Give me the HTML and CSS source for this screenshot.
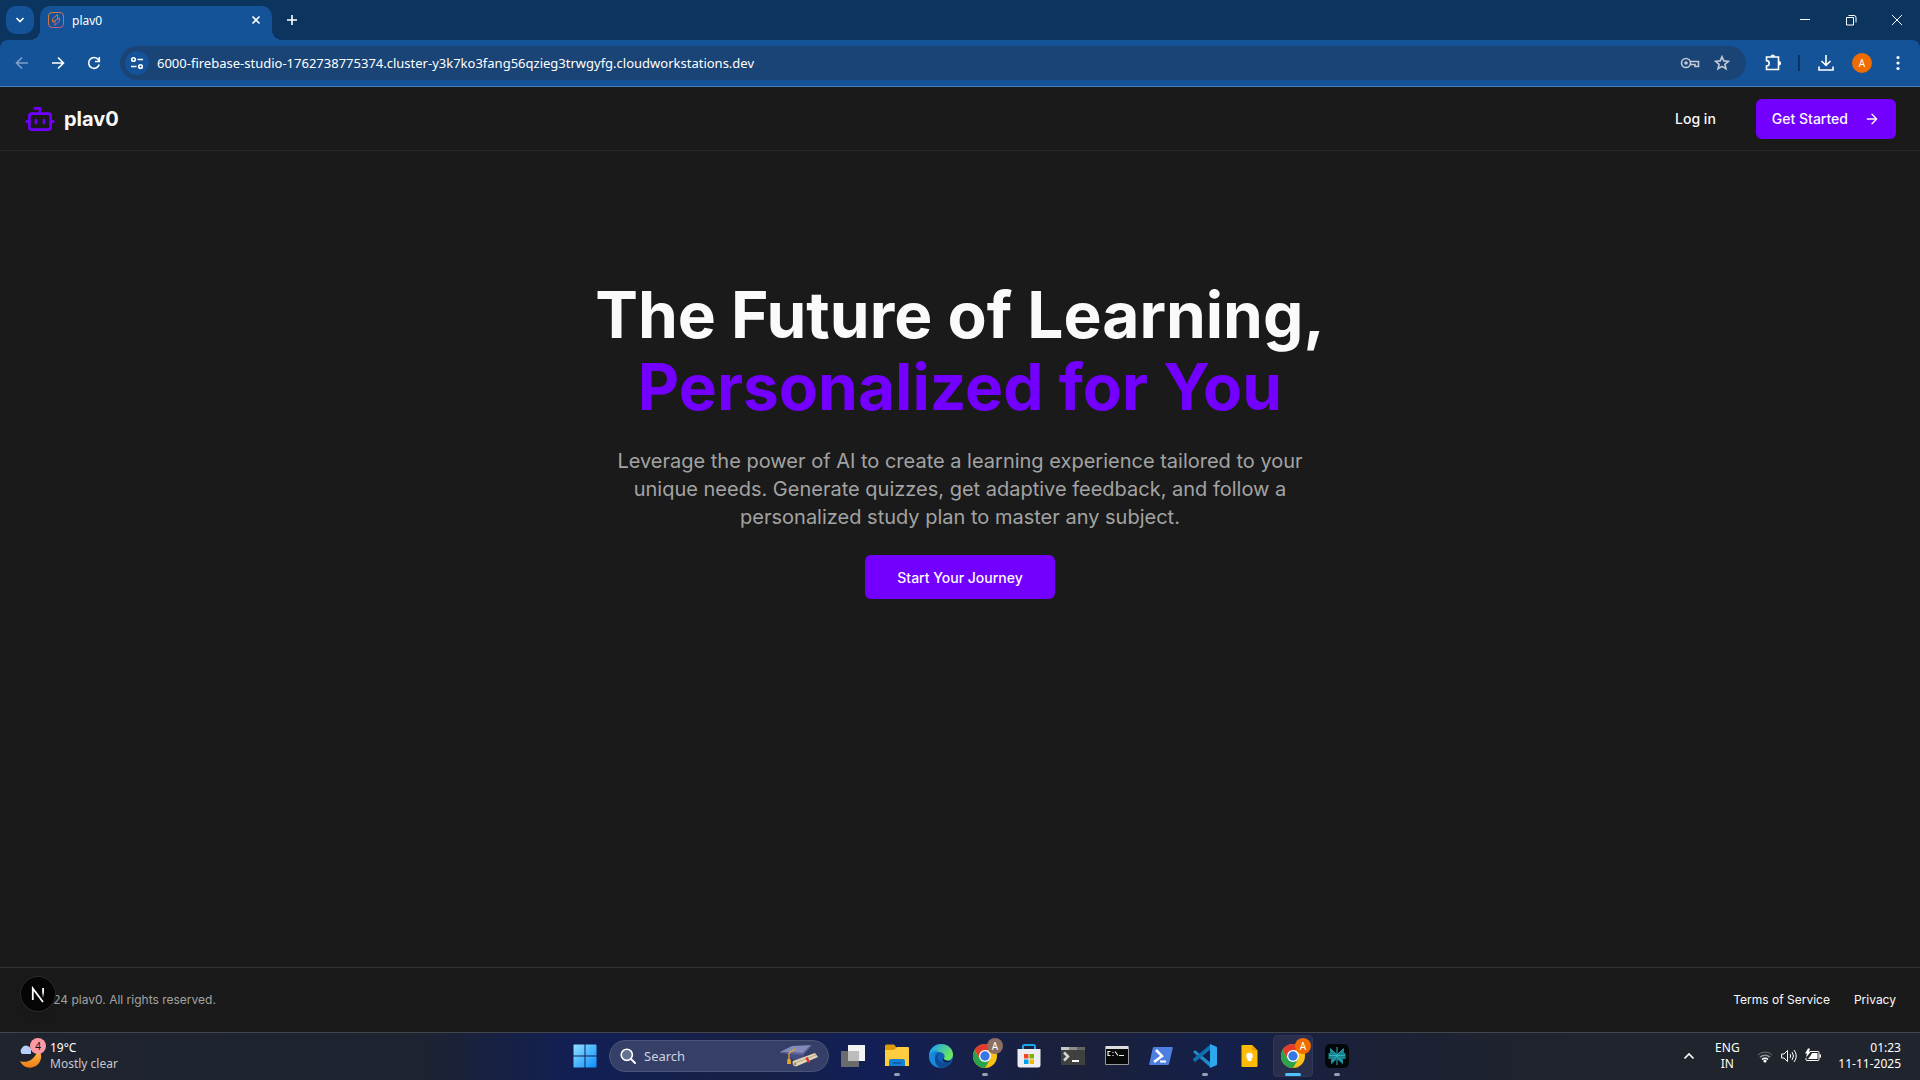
FILE: index.html
```html
<!DOCTYPE html>
<html lang="en">
<head>
<meta charset="utf-8">
<meta name="viewport" content="width=device-width, initial-scale=1">
<title>plav0</title>
<link rel="stylesheet" href="styles.css">
</head>
<body>
<svg class="defs" aria-hidden="true">
  <symbol id="chrome" viewBox="0 0 24 24">
    <circle cx="12" cy="12" r="12" fill="#fbc116"/>
    <path d="M12 6H22.4A12 12 0 0 0 1.6 6L6.8 15z" fill="#e33b2e"/>
    <path d="M1.6 6A12 12 0 0 0 12 24L17.2 15 12 12 6.8 15z" fill="#2ba24c"/>
    <circle cx="12" cy="12" r="6" fill="#fff"/>
    <circle cx="12" cy="12" r="4.7" fill="#3578e5"/>
  </symbol>
</svg>

<header class="browser">
  <div class="tabstrip">
    <button class="tab-search" aria-label="Search tabs"><svg width="16" height="16" viewBox="0 0 16 16"><path d="m4.500 6 3.500 3.500L11.500 6" class="line w2"/></svg></button>
    <div class="tab">
      <svg width="16" height="16" viewBox="0 0 16 16"><defs><linearGradient id="fav" x1="0" y1="0" x2="1" y2="1"><stop offset="0" stop-color="#d9822b"/><stop offset="1" stop-color="#b2569a"/></linearGradient></defs><g fill="none" stroke="url(#fav)"><rect x=".5" y=".5" width="15" height="15" rx="3.500"/><path d="M9.500 2.500 4.500 7v3L7 9v4.500L11.500 9V6L9.500 7zM5 9.500 11 6.500"/></g></svg>
      <span class="tab-title">plav0</span>
      <button class="tab-close" aria-label="Close tab"><svg width="16" height="16" viewBox="0 0 16 16"><path d="m4.500 4.500 7 7m0-7-7 7" class="line w2"/></svg></button>
    </div>
    <button class="new-tab" aria-label="New tab"><svg width="16" height="16" viewBox="0 0 16 16"><path d="M8 3v10M3 8h10" class="line w2"/></svg></button>
    <div class="window-controls">
      <button aria-label="Minimize"><svg width="12" height="12" viewBox="0 0 12 12"><path d="M1 5.500h10" class="line"/></svg></button>
      <button aria-label="Restore"><svg width="12" height="12" viewBox="0 0 12 12"><path d="M1.500 3.500h7v7.500h-7zM3.500 1.500H9a2 2 0 0 1 2 2v5" class="line"/></svg></button>
      <button aria-label="Close"><svg width="12" height="12" viewBox="0 0 12 12"><path d="m1 1 10 10m0-10L1 11" class="line"/></svg></button>
    </div>
  </div>
  <div class="toolbar">
    <button class="tool dim" aria-label="Back"><svg width="16" height="16" viewBox="0 0 16 16"><path d="M14 8H3m5-5.500L2.500 8 8 13.500" class="line w2"/></svg></button>
    <button class="tool" aria-label="Forward"><svg width="16" height="16" viewBox="0 0 16 16"><path d="M2 8h11M8 2.500 13.500 8 8 13.500" class="line w2"/></svg></button>
    <button class="tool" aria-label="Reload"><svg width="16" height="16" viewBox="0 0 16 16"><path d="M13.200 9.500A5.400 5.400 0 1 1 12.300 4.600L13.500 6M13.300 2v4.500H9" class="line w2"/></svg></button>
    <div class="address">
      <button class="site-info" aria-label="View site information"><svg width="14" height="14" viewBox="0 0 14 14"><path d="M7.500 3.500H13M1 10.500h5.500" class="line w2"/><circle cx="3.500" cy="3.500" r="1.800" class="line w2"/><circle cx="10.500" cy="10.500" r="1.800" class="line w2"/></svg></button>
      <input class="url" type="text" aria-label="Address" value="6000-firebase-studio-1762738775374.cluster-y3k7ko3fang56qzieg3trwgyfg.cloudworkstations.dev">
      <button class="in-address" aria-label="Passwords"><svg width="20" height="16" viewBox="0 0 20 16"><circle cx="6" cy="8" r="4.500" class="line w2"/><circle cx="6" cy="8" r="1.800" fill="currentColor"/><path d="M10.500 6.500h8v5h-3.500v-2h-4.500" class="line w2"/></svg></button>
      <button class="in-address" aria-label="Bookmark this tab"><svg width="16" height="16" viewBox="0 0 16 16"><path d="m8 1.700 1.800 4.200 4.600.4-3.500 3 1.100 4.500L8 11.400l-4 2.400 1.100-4.500-3.500-3 4.600-.4z" class="line w2"/></svg></button>
    </div>
    <button class="tool" aria-label="Extensions"><svg width="18" height="18" viewBox="0 0 18 18"><path d="M2.500 3h12v12.500h-12v-3.500a2.700 2.700 0 0 0 0-5.400z" class="line w2"/><path d="M6.500 2.700a2.300 2.300 0 0 1 4.600 0zM14.800 7a2.300 2.300 0 0 1 0 4.600z" fill="currentColor"/></svg></button>
    <span class="divider"></span>
    <button class="tool" aria-label="Downloads"><svg width="16" height="16" viewBox="0 0 16 16"><path d="M8 0v10M3.500 6 8 10.300 12.500 6M1 11.500V15h14v-3.500" class="line w2"/></svg></button>
    <button class="tool" aria-label="Profile"><span class="avatar">A</span></button>
    <button class="tool" aria-label="Menu"><svg width="16" height="16" viewBox="0 0 16 16" fill="currentColor"><circle cx="8" cy="2.500" r="1.600"/><circle cx="8" cy="8" r="1.600"/><circle cx="8" cy="13.500" r="1.600"/></svg></button>
  </div>
</header>

<div class="site">
  <header class="site-header">
    <a class="brand" href="#">
      <svg width="32" height="32" viewBox="0 0 24 24" fill="none" stroke="#7300ff" stroke-width="2" stroke-linecap="round" stroke-linejoin="round"><path d="M12 8V4H8"/><rect width="16" height="12" x="4" y="8" rx="2"/><path d="M2 14h2M20 14h2M15 13v2M9 13v2"/></svg>
      <span>plav0</span>
    </a>
    <nav class="site-nav">
      <a class="btn ghost" href="#">Log in</a>
      <a class="btn primary" href="#">Get Started <svg width="16" height="16" viewBox="0 0 24 24" fill="none" stroke="currentColor" stroke-width="2" stroke-linecap="round" stroke-linejoin="round"><path d="M5 12h14M12 5l7 7-7 7"/></svg></a>
    </nav>
  </header>

  <main class="hero">
    <h1>The Future of Learning,<span class="accent">Personalized for You</span></h1>
    <p>Leverage the power of AI to create a learning experience tailored to your unique needs. Generate quizzes, get adaptive feedback, and follow a personalized study plan to master any subject.</p>
    <a class="btn primary large" href="#">Start Your Journey</a>
  </main>

  <footer class="site-footer">
    <p>© 2024 plav0. All rights reserved.</p>
    <nav class="legal"><a href="#">Terms of Service</a><a href="#">Privacy</a></nav>
    <button class="dev-badge" aria-label="Open Next.js Dev Tools"><svg width="36" height="36" viewBox="0 0 36 36"><defs><linearGradient id="n1" x1="0" y1="0" x2="0" y2="1"><stop offset=".4" stop-color="#fff"/><stop offset="1" stop-color="#fff" stop-opacity="0"/></linearGradient></defs><path d="M12.800 24V12.500L23 26" fill="none" stroke="#fff" stroke-width="1.800"/><path d="M22.200 12h1.800v10h-1.800z" fill="url(#n1)"/></svg></button>
  </footer>
</div>

<footer class="taskbar">
  <button class="weather" aria-label="Weather: 19°C, mostly clear">
    <span class="weather-icon">
      <svg width="24" height="24" viewBox="0 0 24 24"><defs><linearGradient id="moon" x1="0" y1="0" x2="0" y2="1"><stop offset="0" stop-color="#ffc24b"/><stop offset="1" stop-color="#f07c16"/></linearGradient></defs><path d="M20 5A11 11 0 1 1 2 17C9 20 18 15 20 5z" fill="url(#moon)"/><path d="M4 10a4 4 0 0 1 0-6 5 5 0 0 1 9 1v5z" fill="#b7d0fa"/></svg>
      <span class="count">4</span>
    </span>
    <span class="weather-text"><span>19°C</span><span class="sub">Mostly clear</span></span>
  </button>

  <div class="apps">
    <button class="app" aria-label="Start"><svg width="24" height="24" viewBox="0 0 24 24"><defs><linearGradient id="win" x1="0" y1="0" x2="1" y2="1"><stop offset="0" stop-color="#8fe3ff"/><stop offset="1" stop-color="#0b8dff"/></linearGradient></defs><path d="M1 .5h10.500v11H.5V1zM12.500.5H23l.5.5v10.500h-11zM.5 12.500h11v11H1l-.5-.5zM12.500 12.500h11V23l-.5.500H12.500z" fill="url(#win)"/></svg></button>
    <label class="search">
      <svg width="16" height="16" viewBox="0 0 16 16"><circle cx="6.800" cy="6.800" r="5.600" fill="#66708f" stroke="#fff" stroke-width="1.600"/><path d="m11 11 4 4" stroke="#fff" stroke-width="2" stroke-linecap="round"/></svg>
      <input type="text" placeholder="Search" aria-label="Search">
      <svg width="38" height="24" viewBox="0 0 38 24"><path d="M10 7v6c3 4 11 3 14 0V7z" fill="#454d80"/><path d="M0 8 12 2 31 1 23 9z" fill="#8389b8"/><path d="m0 8 23 1 8-8v1.500L23 11 0 9z" fill="#5d6498"/><path d="m15 5-6 4v7" fill="none" stroke="#e9a92b" stroke-width="1.300"/><path d="M7.500 15h3l.5 5H7z" fill="#e8a723"/><path d="m13 17 22-8 3 4-22 9.500c-3 0-4-3-3-5.500z" fill="#e2d5b8"/><path d="m15 19 21-8" stroke="#b8a27d"/><path d="m26.500 13.500 2.500 5" stroke="#d93131" stroke-width="2.500"/><circle cx="15" cy="20" r="1.500" fill="#a38e68"/></svg>
    </label>
    <button class="app" aria-label="Task view"><svg width="24" height="24" viewBox="0 0 24 24"><path d="M7 1h17v16H7z" fill="#f3f3f3"/><path d="M0 7h18v16H0z" fill="#6b6b6b"/><path d="M7 7h11v10H7z" fill="#bdbdbd"/></svg></button>
    <button class="app running" aria-label="File Explorer"><svg width="24" height="24" viewBox="0 0 24 24"><path d="M0 2q0-1.500 1.500-1.500H9L12 4v4H0z" fill="#dd9a09"/><path d="M0 6h9l3-3h11q1 0 1 1v18H0z" fill="#ffcd3e"/><path d="M4 22v-5q0-2 2-2h12q2 0 2 2v5z" fill="#1681d2"/><path d="M7.500 19h9" stroke="#075da5" stroke-width="1.500"/></svg></button>
    <button class="app" aria-label="Microsoft Edge"><svg width="24" height="24" viewBox="0 0 24 24"><defs><linearGradient id="edge" x1="0" y1="0" x2="1" y2=".5"><stop offset=".2" stop-color="#24a7e6"/><stop offset="1" stop-color="#6ee85a"/></linearGradient></defs><circle cx="12" cy="12" r="12" fill="#0f61b6"/><path d="M0 11C1 4 6 0 12 0c7 0 12 5 12 10.500 0 4-3 6-6 6-4 0-4-1.500-3-2.500 2-2-.5-6-5-6-4 0-8 2-10 6z" fill="url(#edge)"/><path d="M0 11c2-4 6-5 9.500-4.500-5 2-5 11 0 17C4 23 0 18 0 12z" fill="#168bdc"/><path d="M11 9c-4 3-2 10 5 10 3 0 5-1 6-2-3 6-8 7-11.500 6C4 20 5 10 11 9z" fill="#114a94"/><path d="M14 14c-1 3 1 5 5 4.500 2-.3 3-1.500 4-2.500-2 2-7 1-9-2z" fill="#10214f"/></svg></button>
    <button class="app running" aria-label="Google Chrome"><svg width="24" height="24"><use href="#chrome"/></svg><span class="profile brown">A</span></button>
    <button class="app" aria-label="Microsoft Store"><svg width="24" height="24" viewBox="0 0 24 24"><path d="M6 6V2.500q0-1.500 1.500-1.500h9Q18 1 18 2.500V6" fill="none" stroke="#18a8ec" stroke-width="2"/><path d="M.5 5h23v16q0 2.500-2.500 2.500H3Q.5 23.500.5 21z" fill="#eeeef2"/><path d="M7 10h4.500v4.500H7z" fill="#f04b25"/><path d="M12.500 10H17v4.500h-4.500z" fill="#78b400"/><path d="M7 15.500h4.500V20H7z" fill="#009fe9"/><path d="M12.500 15.500H17V20h-4.500z" fill="#f9b400"/></svg></button>
    <button class="app" aria-label="Terminal"><svg width="24" height="24" viewBox="0 0 24 24"><path d="M0 3h24v18H0z" fill="#404040"/><path d="M0 3h8v3H0z" fill="#c6c6c6"/><path d="M8 3h8v3H8z" fill="#8d8d8d"/><path d="M16 3h8v3h-8z" fill="#666"/><path d="m3 8.500 4 4-4 4" fill="none" stroke="#d4d4d4" stroke-width="2.500"/><path d="M11 17h7" stroke="#fff" stroke-width="2"/></svg></button>
    <button class="app" aria-label="Command Prompt"><svg width="24" height="24" viewBox="0 0 24 24"><path d="M.5 2.500h23v18H.5z" fill="#080808" stroke="#999"/><path d="M1 2h22v3H1z" fill="#ddd"/><path d="M5.500 7.500H3v4h2.500M8 8v1m0 2v1M10 7.500l3 4M14 11.500h5" fill="none" stroke="#eee" stroke-width="1.200"/></svg></button>
    <button class="app" aria-label="PowerShell"><svg width="24" height="24" viewBox="0 0 24 24"><path d="M5 3h18q1 0 .8 1L20 20q-.2 1-1.500 1H1q-1 0-.8-1L3.800 4Q4 3 5 3z" fill="#4c7fe0"/><path d="m7 6 6 6-8 6" fill="none" stroke="#fff" stroke-width="2.500"/><path d="M11 17.500h6" stroke="#fff" stroke-width="2"/></svg></button>
    <button class="app running" aria-label="Visual Studio Code"><svg width="24" height="24" viewBox="0 0 24 24"><path d="m0 8 2-2 16 13v5L1 9z" fill="#2489ca"/><path d="m0 16 2 2L18 5V0L0 15z" fill="#1070b3"/><path d="m17 0 7 3v18l-7 3z" fill="#2da8ee"/></svg></button>
    <button class="app" aria-label="Google Keep"><svg width="24" height="24" viewBox="0 0 24 24"><path d="M4.500 1H15l5.500 5.500V22q0 1-1 1h-14q-1 0-1-1V2q0-1 1-1z" fill="#fdbb05"/><path d="M15 1v5.500h5.500z" fill="#f19b00"/><circle cx="12.500" cy="12" r="3.300" fill="#fff"/><path d="M10.500 15h4v2h-4z" fill="#fff"/></svg></button>
    <button class="app active" aria-label="Google Chrome, plav0"><svg width="24" height="24"><use href="#chrome"/></svg><span class="profile orange">A</span></button>
    <button class="app running" aria-label="Perplexity"><svg width="24" height="24" viewBox="0 0 24 24"><rect width="24" height="24" rx="5" fill="#050808"/><path d="M11.500 10 5 4v5H3.500v6H6v5.500l5.500-5zM12.500 10 19 4v5h1.500v6H18v5.500l-5.500-5z" fill="#17838f"/><path d="M12 3v18M5.500 5 12 11l6.500-6M6.500 18 12 12l5.500 6M4 11.500h16" fill="none" stroke="#2eb4be"/></svg></button>
  </div>

  <div class="tray">
    <button class="chevron" aria-label="Show hidden icons"><svg width="12" height="12" viewBox="0 0 12 12"><path d="m1.500 8.500 4.500-4.500 4.500 4.500" class="line w2"/></svg></button>
    <button class="language" aria-label="Input language"><span>ENG</span><span>IN</span></button>
    <button class="status" aria-label="Network, volume and battery">
      <svg width="16" height="16" viewBox="0 0 16 16"><path d="M.8 7a10.200 10.200 0 0 1 14.400 0" class="line" opacity=".35"/><path d="M3 9.300a7 7 0 0 1 10 0" class="line w2" opacity=".5"/><path d="M5 11.500a4.300 4.300 0 0 1 6 0" class="line w2"/><circle cx="8" cy="13" r="1.600" fill="currentColor"/></svg>
      <svg width="16" height="16" viewBox="0 0 16 16"><path d="M.6 6H3l3.500-3.500v11L3 10H.6zM9 6q1.500 2 0 4M11 4q3 4 0 8M13 2q4.500 6 0 12" class="line"/></svg>
      <svg width="16" height="16" viewBox="0 0 16 16"><path d="M5 3.500h8q1 0 1 1v7q0 1-1 1H2q-1 0-1-1V10" class="line"/><path d="M7 5h5.500v6H3l3-4zM14.500 6.500H16v3h-1.500zM3 .5h2L4 3.500h2l-5 6 1-4H0z" fill="currentColor"/></svg>
    </button>
    <button class="clock" aria-label="Date and time"><span>01:23</span><span>11-11-2025</span></button>
  </div>
</footer>
</body>
</html>
```
FILE: styles.css
```css
:root {
  --frame: #0b345f;
  --toolbar: #155399;
  --field: #1a4475;
  --page: #1a1a1a;
  --accent: #7300ff;
  --system: "Noto Sans", "Open Sans", sans-serif;
  --ui: Inter, "Liberation Sans", sans-serif;
}

*, *::before, *::after { box-sizing: border-box; }

body {
  margin: 0;
  min-height: 100vh;
  display: flex;
  flex-direction: column;
  background: var(--page);
  color: #fafafa;
  font-family: var(--ui);
}

button {
  display: flex;
  align-items: center;
  justify-content: center;
  flex: none;
  padding: 0;
  border: 0;
  background: none;
  color: inherit;
  font: inherit;
}

input {
  min-width: 0;
  flex: 1;
  padding: 0;
  border: 0;
  outline: 0;
  background: none;
  color: inherit;
  font: inherit;
}

a { color: inherit; text-decoration: none; }
p, h1 { margin: 0; }
svg { display: block; flex: none; }

.defs { position: absolute; width: 0; height: 0; }
.line { fill: none; stroke: currentColor; stroke-width: 1; }
.w2 { stroke-width: 1.6; }

/* Browser frame */
.browser {
  background: var(--frame);
  color: #fff;
  font-family: var(--system);
}

.tabstrip {
  display: flex;
  align-items: center;
  height: 40px;
  padding-left: 6px;
}

.tab-search {
  width: 28px;
  height: 28px;
  margin-right: 6px;
  border-radius: 10px;
  background: var(--toolbar);
}

.tab {
  position: relative;
  display: flex;
  align-items: center;
  align-self: flex-end;
  gap: 8px;
  width: 232px;
  height: 34px;
  padding: 0 8px 6px;
  border-radius: 10px 10px 0 0;
  background: var(--toolbar);
  font-size: 12px;
}

.tab::before, .tab::after {
  content: "";
  position: absolute;
  bottom: 0;
  width: 10px;
  height: 10px;
}
.tab::before { left: -10px; background: radial-gradient(circle at 0 0, transparent 10px, var(--toolbar) 10px); }
.tab::after { right: -10px; background: radial-gradient(circle at 100% 0, transparent 10px, var(--toolbar) 10px); }

.tab-title { flex: 1; }
.new-tab { width: 28px; height: 28px; margin-left: 6px; }
.window-controls { display: flex; margin-left: auto; }
.window-controls button { width: 46px; height: 40px; }

.toolbar {
  display: flex;
  align-items: center;
  gap: 2px;
  height: 47px;
  padding: 0 5px;
  border-bottom: 1px solid #4b7fbd;
  border-radius: 8px 8px 0 0;
  background: var(--toolbar);
}

.tool { width: 34px; height: 34px; }
.dim { opacity: .45; }

.address {
  display: flex;
  align-items: center;
  flex: 1;
  height: 34px;
  margin: 0 8px 0 7px;
  padding: 0 8px 0 5px;
  border-radius: 17px;
  background: var(--field);
}

.site-info {
  width: 24px;
  height: 24px;
  margin-right: 8px;
  border-radius: 50%;
  background: var(--toolbar);
}

.url { font-size: 13px; }
.in-address { width: 32px; height: 32px; color: #c2c9d2; }
.divider { width: 2px; height: 16px; margin: 0 7px 0 6px; background: var(--frame); }

.avatar {
  width: 20px;
  border-radius: 50%;
  background: #ef6c00;
  font-size: 10px;
  line-height: 20px;
}

/* Site */
.site {
  display: flex;
  flex: 1;
  flex-direction: column;
}

.site-header {
  display: flex;
  align-items: center;
  justify-content: space-between;
  height: 64px;
  padding: 0 24px;
  border-bottom: 1px solid #282828;
}

.brand {
  display: flex;
  align-items: center;
  gap: 8px;
  font-size: 20px;
  font-weight: 700;
}

.site-nav { display: flex; gap: 24px; }

.btn {
  display: inline-flex;
  align-items: center;
  justify-content: center;
  gap: 16px;
  height: 40px;
  padding: 0 16px;
  border-radius: 6px;
  font-size: 14px;
  font-weight: 500;
}
.primary { background: var(--accent); }
.large { height: 44px; padding: 0 32px; }

.hero {
  display: flex;
  flex: 1;
  flex-direction: column;
  align-items: center;
  padding: 128px 24px;
  text-align: center;
}

.hero h1 {
  font-size: 64px;
  font-weight: 700;
  line-height: 72px;
}
.accent { display: block; color: var(--accent); }

.hero p {
  max-width: 700px;
  margin: 24px 0;
  color: #a3a3a3;
  font-size: 20px;
  line-height: 28px;
}

.site-footer {
  position: relative;
  display: flex;
  align-items: center;
  justify-content: space-between;
  height: 65px;
  padding: 0 24px;
  border-top: 1px solid #333;
  font-size: 12px;
  line-height: 16px;
}
.site-footer p { color: #a3a3a3; }
.legal { display: flex; gap: 24px; }

.dev-badge {
  position: absolute;
  left: 20px;
  top: 8px;
  width: 36px;
  height: 36px;
  border-radius: 50%;
  background: #050505;
  box-shadow: inset 0 0 0 1px #2c2c2c, 0 12px 20px rgba(0, 0, 0, .1);
}

/* Taskbar */
.taskbar {
  display: grid;
  grid-template-columns: 1fr auto 1fr;
  align-items: center;
  height: 48px;
  padding: 0 0 2px 2px;
  border-top: 1px solid #43454c;
  background: linear-gradient(90deg, #1f242e, #1d2331 22%, #121f55 30%, #172044 39%, #121f57 45%, #1b213a 56%, #14204a 64%, #1c2135 72%, #20242c 82%);
  color: #fff;
  font-family: var(--system);
  font-size: 12px;
  line-height: 16px;
}

.weather {
  justify-self: start;
  gap: 8px;
  padding-left: 16px;
  text-align: left;
}
.weather-icon { position: relative; }
.weather-text, .language, .clock { display: flex; flex-direction: column; }
.sub { color: #c5c8ce; }

.count, .profile {
  position: absolute;
  top: -6px;
  width: 16px;
  border-radius: 50%;
  font-size: 10px;
  text-align: center;
}
.count { right: -4px; background: #ff99a4; color: #111; }

.apps { display: flex; align-items: center; }

.app {
  position: relative;
  width: 44px;
  height: 44px;
}
.profile { top: 4px; right: 4px; }
.brown { background: #8d6e63; }
.orange { background: #ef6c00; }

.running::after, .active::after {
  content: "";
  position: absolute;
  bottom: 2px;
  width: 6px;
  height: 3px;
  border-radius: 2px;
  background: #9a9fb0;
}
.active::after { width: 16px; background: #4cc2ff; }
.active::before {
  content: "";
  position: absolute;
  inset: 1px 2px;
  z-index: -1;
  border: 1px solid #30375a;
  border-radius: 4px;
  background: #282e4b;
}
.active { z-index: 0; }

.search {
  display: flex;
  align-items: center;
  gap: 8px;
  width: 220px;
  height: 32px;
  margin: 0 2px;
  padding: 0 10px;
  border: 1px solid #4a5478;
  border-radius: 16px;
  background: #353f68;
  font-size: 13px;
}
.search input::placeholder { color: #cdd2df; opacity: 1; }

.tray {
  display: flex;
  align-items: center;
  justify-self: end;
  padding-right: 19px;
}
.chevron { width: 32px; height: 40px; }
.language { width: 44px; }
.status { gap: 8px; padding: 0 8px; }
.clock { align-items: flex-end; margin-left: 9px; }
```
